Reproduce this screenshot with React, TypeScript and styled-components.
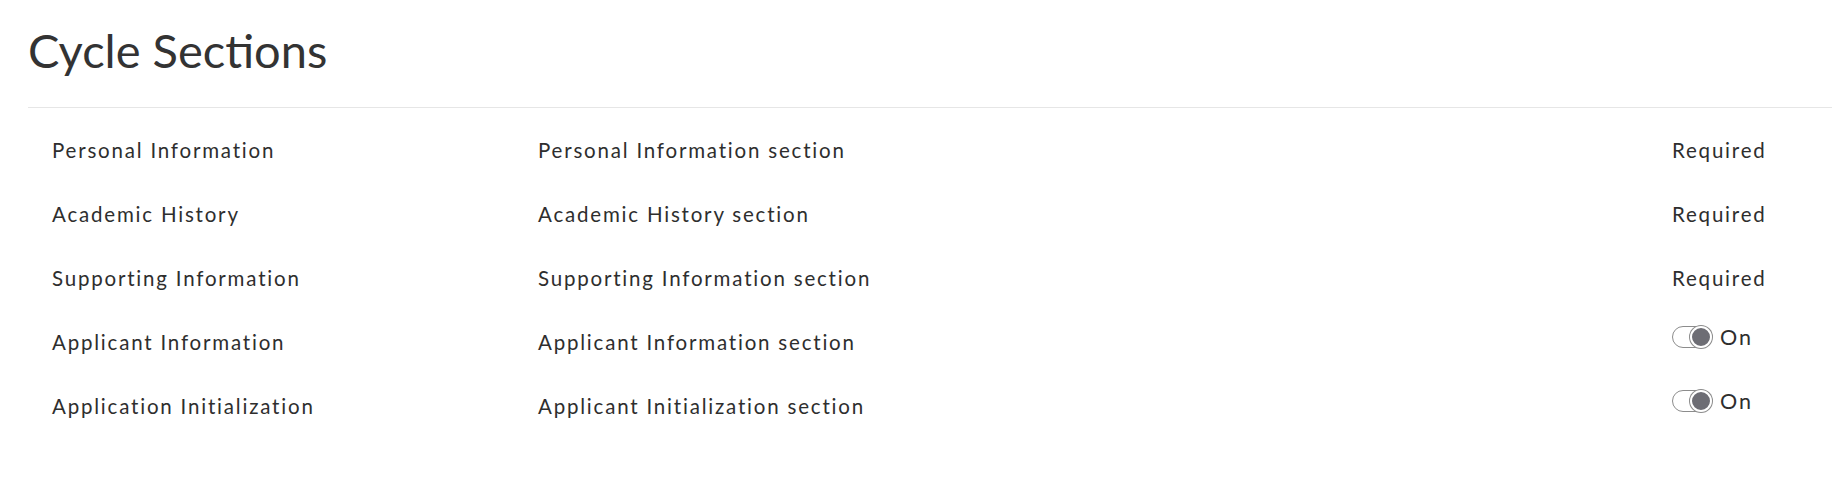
import React from "react";
import styled, { createGlobalStyle } from "styled-components";

const GlobalStyle = createGlobalStyle`
  html, body {
    margin: 0;
    padding: 0;
    background: #ffffff;
  }
  body {
    font-family: "Lato", "Open Sans", sans-serif;
    color: #2e2e2e;
    -webkit-font-smoothing: antialiased;
  }
`;

const Page = styled.main`
  padding: 23px 0 0 28px;
`;

const Header = styled.header`
  padding-bottom: 29px;
  border-bottom: 1px solid #e6e6e6;
`;

const Title = styled.h1`
  margin: 0;
  font-family: "Lato", sans-serif;
  font-weight: 400;
  font-size: 47px;
  line-height: 55px;
  color: #333333;
`;

const List = styled.ul`
  list-style: none;
  margin: 0;
  padding: 10px 0 0 0;
`;

const Row = styled.li`
  display: grid;
  grid-template-columns: 486px 1fr 136px;
  align-items: center;
  height: 64px;
  padding: 0 24px;
`;

const Cell = styled.span`
  font-size: 20.5px;
  line-height: 24px;
  letter-spacing: 1.8px;
  color: #2e2e2e;
  white-space: nowrap;
`;

const SwitchGroup = styled.label`
  display: flex;
  align-items: center;
  gap: 8px;
  margin-bottom: 11px;
  cursor: pointer;
`;

const Track = styled.span<{ $on: boolean }>`
  box-sizing: border-box;
  display: flex;
  align-items: center;
  justify-content: ${(p) => (p.$on ? "flex-end" : "flex-start")};
  width: 40px;
  height: 22px;
  border: 1px solid #8c8c8c;
  border-radius: 11px;
  background: #ffffff;
`;

const Knob = styled.span`
  box-sizing: border-box;
  width: 22px;
  height: 22px;
  margin: -1px;
  border-radius: 50%;
  border: 2px solid #ffffff;
  background: #6d6d74;
  box-shadow: 0 0 0 1px #8c8c8c;
`;

const SwitchText = styled.span`
  font-size: 21.5px;
  line-height: 24px;
  letter-spacing: 2px;
  color: #2e2e2e;
`;

type Section = {
  name: string;
  description: string;
  required: boolean;
};

const sections: Section[] = [
  { name: "Personal Information", description: "Personal Information section", required: true },
  { name: "Academic History", description: "Academic History section", required: true },
  { name: "Supporting Information", description: "Supporting Information section", required: true },
  { name: "Applicant Information", description: "Applicant Information section", required: false },
  { name: "Application Initialization", description: "Applicant Initialization section", required: false },
];

function Toggle({ on }: { on: boolean }) {
  return (
    <SwitchGroup>
      <Track $on={on} role="switch" aria-checked={on}>
        <Knob />
      </Track>
      <SwitchText>{on ? "On" : "Off"}</SwitchText>
    </SwitchGroup>
  );
}

export default function App() {
  return (
    <>
      <GlobalStyle />
      <Page>
        <Header>
          <Title>Cycle Sections</Title>
        </Header>
        <List>
          {sections.map((s) => (
            <Row key={s.name}>
              <Cell>{s.name}</Cell>
              <Cell>{s.description}</Cell>
              {s.required ? <Cell>Required</Cell> : <Toggle on />}
            </Row>
          ))}
        </List>
      </Page>
    </>
  );
}
